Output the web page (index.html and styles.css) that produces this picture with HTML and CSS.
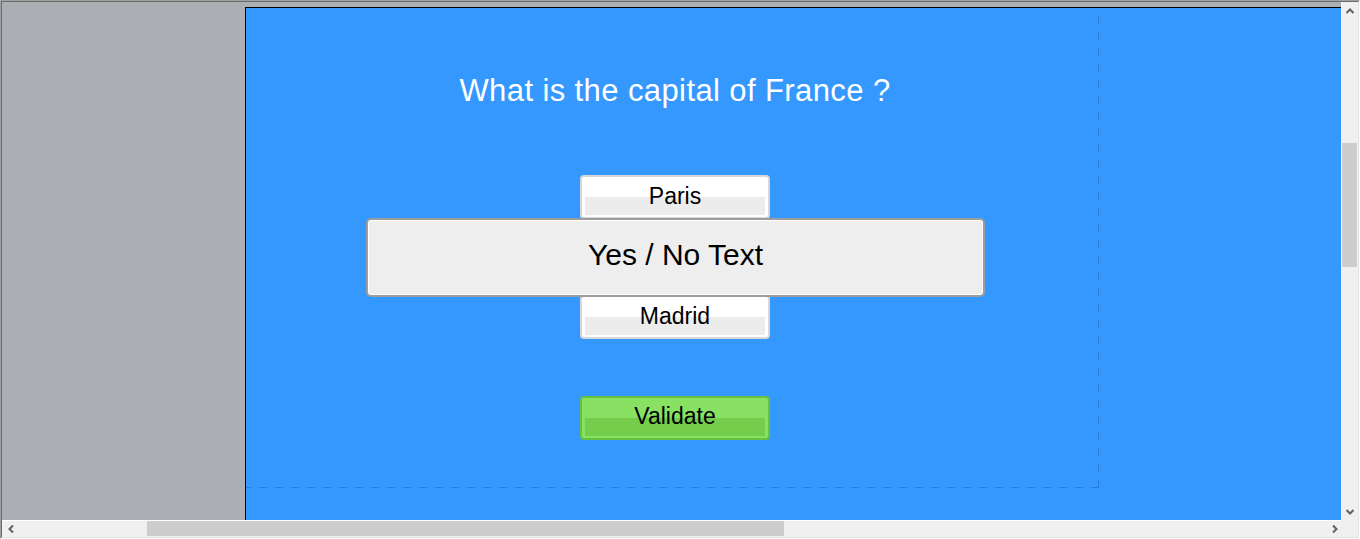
FILE: index.html
```html
<!DOCTYPE html>
<html>
<head>
<meta charset="utf-8">
<link rel="stylesheet" href="styles.css">
</head>
<body>
<div class="window">
  <div class="frame">
    <div class="viewport">
      <div class="canvas">
        <div class="stage">
          <h1 class="question">What is the capital of France ?</h1>
          <div class="answers">
            <div class="btn btn-answer"><span>Paris</span></div>
            <div class="btn btn-answer"></div>
            <div class="btn btn-answer"><span>Madrid</span></div>
          </div>
          <div class="btn btn-validate"><span>Validate</span></div>
          <div class="dialog"><span>Yes / No Text</span></div>
        </div>
      </div>
    </div>
    <div class="vscroll">
      <div class="arrow">
        <svg width="10" height="8" viewBox="0 0 10 8"><path d="M1.5 6 L5 2.5 L8.5 6" fill="none" stroke="#606060" stroke-width="2"/></svg>
      </div>
      <div class="vtrack"><div class="vthumb"></div></div>
      <div class="arrow">
        <svg width="10" height="8" viewBox="0 0 10 8"><path d="M1.5 2 L5 5.5 L8.5 2" fill="none" stroke="#606060" stroke-width="2"/></svg>
      </div>
    </div>
    <div class="hscroll">
      <div class="harrow">
        <svg width="8" height="10" viewBox="0 0 8 10"><path d="M6 1.5 L2.5 5 L6 8.5" fill="none" stroke="#606060" stroke-width="2"/></svg>
      </div>
      <div class="htrack"><div class="hthumb"></div></div>
      <div class="harrow harrow-right">
        <svg width="8" height="10" viewBox="0 0 8 10"><path d="M2 1.5 L5.5 5 L2 8.5" fill="none" stroke="#606060" stroke-width="2"/></svg>
      </div>
    </div>
    <div class="corner"></div>
  </div>
</div>
</body>
</html>
```

FILE: styles.css
```css
* { box-sizing: border-box; }

html, body {
  margin: 0;
  padding: 0;
  background: #f0f0f0;
  font-family: "Liberation Sans", Arial, sans-serif;
}

.window {
  width: 1360px;
  height: 539px;
  border-top: 1px solid #a0a0a0;
  border-left: 1px solid #a0a0a0;
  border-right: 1px solid #ffffff;
  border-bottom: 1px solid #ffffff;
}

.frame {
  width: 100%;
  height: 100%;
  border-top: 1px solid #6b6b6b;
  border-left: 1px solid #6b6b6b;
  border-right: 1px solid #e3e3e3;
  border-bottom: 1px solid #e3e3e3;
  display: grid;
  grid-template-columns: 1fr 17px;
  grid-template-rows: 1fr 17px;
}

.viewport {
  background: #abaeb2;
  padding: 5px 0 0 243px;
  display: flex;
  overflow: hidden;
}

.canvas {
  flex: 1;
  background: #3498fe;
  border-top: 1px solid #000;
  border-left: 1px solid #000;
  overflow: hidden;
}

.stage {
  position: relative;
  width: 853px;
  height: 480px;
  padding: 65px 0 0 5px;
  display: flex;
  flex-direction: column;
  align-items: center;
  background-image:
    linear-gradient(to bottom, #2b7dd5 8px, transparent 8px),
    linear-gradient(to right, #2b7dd5 8px, transparent 8px);
  background-size: 1px 16px, 16px 1px;
  background-repeat: repeat-y, repeat-x;
  background-position: 100% 8px, 13px 100%;
}

.question {
  margin: 0;
  font-weight: normal;
  font-size: 31px;
  letter-spacing: 0.4px;
  line-height: 36px;
  color: #ffffff;
  white-space: nowrap;
}

.answers {
  margin-top: 66px;
  display: flex;
  flex-direction: column;
  gap: 16px;
}

.btn {
  width: 190px;
  height: 44px;
  border-radius: 4px;
  border: 2px solid #d6d6d6;
  display: flex;
  align-items: center;
  justify-content: center;
  padding-bottom: 2px;
  font-size: 23px;
  color: #000;
  background-repeat: no-repeat;
  background-size: calc(100% - 6px) 18px;
  background-position: 3px 20px;
}

.btn-answer {
  background-color: #ffffff;
  background-image: linear-gradient(#ececec, #ececec);
}

.btn-validate {
  margin-top: 57px;
  padding-bottom: 4px;
  border-color: #66c23e;
  background-color: #88e163;
  background-image: linear-gradient(#75cd4c, #75cd4c);
}

.dialog {
  position: absolute;
  left: 120px;
  top: 210px;
  width: 619px;
  height: 79px;
  border: 2px solid #9d9d9d;
  border-radius: 5px;
  box-shadow: inset 0 0 0 1px #ffffff;
  background: #eeeeee;
  display: flex;
  align-items: center;
  justify-content: center;
  padding-bottom: 5px;
  font-size: 30px;
  color: #000;
}

.vscroll {
  background: #f0f0f0;
  border-left: 1px solid #fafafa;
  display: flex;
  flex-direction: column;
}

.arrow {
  height: 17px;
  display: flex;
  align-items: center;
  justify-content: center;
}

.vtrack {
  flex: 1;
}

.vthumb {
  margin-top: 124px;
  width: 15px;
  height: 124px;
  background: #cdcdcd;
}

.hscroll {
  background: #f0f0f0;
  border-top: 1px solid #ffffff;
  display: flex;
}

.harrow {
  width: 17px;
  display: flex;
  align-items: center;
  justify-content: center;
}

.harrow-right {
  justify-content: flex-end;
  padding-right: 2px;
}

.htrack {
  flex: 1;
}

.hthumb {
  margin-left: 128px;
  width: 637px;
  height: 15px;
  background: #cdcdcd;
}

.corner {
  background: #f0f0f0;
}
```
